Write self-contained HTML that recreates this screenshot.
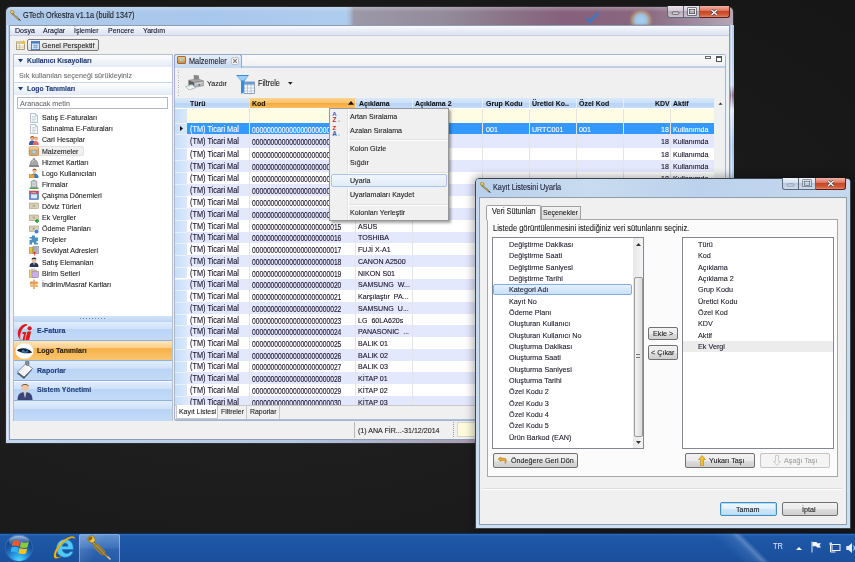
<!DOCTYPE html><html><head><meta charset="utf-8"><style>
*{margin:0;padding:0;box-sizing:border-box}
html,body{width:855px;height:562px;overflow:hidden}
body{background:#1b1b1b;font-family:"Liberation Sans",sans-serif;font-size:7.2px;color:#1e1e1e;position:relative}
.a{position:absolute}
svg{display:block}
.t{position:absolute;line-height:10px;height:10px;white-space:nowrap;transform-origin:0 50%;-webkit-text-stroke:0.1px currentColor}
.b{font-weight:bold}
</style></head><body><div class="a " style="left:0px;top:0px;width:855px;height:533px;background:radial-gradient(ellipse at 30% 60%,#222 0%,#1a1a1a 60%,#161616 100%)"></div>
<div class="a " style="left:5px;top:6px;width:729px;height:438px;border-radius:6px 6px 0 0;background:linear-gradient(90deg,#b0cbeb 0px,#a8c7ec 200px,#aecdee 340px,#a6bcd8 344px,#9c98a8 348px,#938a9a 440px,#8a7488 500px,#86607c 560px,#8a6880 640px,#a08ca0 690px,#b7a8b8 729px);border:1px solid #2e2e2e"></div>
<div class="a " style="left:6px;top:7px;width:727px;height:5px;border-radius:5px 5px 0 0;background:linear-gradient(180deg,rgba(255,255,255,.25),rgba(255,255,255,0))"></div>
<div class="a " style="left:585px;top:12px;width:14px;height:12px;"><svg width="14" height="12" viewBox="0 0 14 12"><path d="M1 6 L5 10 L13 1" stroke="#3a78c8" stroke-width="3" fill="none" opacity=".8"/></svg></div>
<div class="a " style="left:630px;top:10px;width:22px;height:15px;border-radius:50% 50% 0 0;background:radial-gradient(circle at 50% 70%,#a8d0f0 0%,#9cc4e8 40%,rgba(200,160,100,.7) 60%,rgba(140,100,120,0) 75%);filter:blur(1px)"></div>
<div class="a " style="left:6px;top:25px;width:3px;height:418px;background:linear-gradient(180deg,#b8d0ec,#c9dcf2)"></div>
<div class="a " style="left:6.5px;top:25px;width:1.2px;height:418px;background:rgba(255,255,255,.45)"></div>
<div class="a " style="left:729.5px;top:25px;width:4px;height:418px;background:linear-gradient(180deg,#b8cce6 0px,#c8d8f0 60px,#8c6f8c 70px,#e0e8f4 85px,#a8c4ea 120px,#d8e4f4 200px,#8a6a88 210px,#b4cae8 230px,#c8daf0 418px)"></div>
<div class="a " style="left:730.5px;top:25px;width:1.5px;height:418px;background:rgba(255,255,255,.55)"></div>
<div class="a " style="left:6px;top:440px;width:727px;height:3px;background:linear-gradient(90deg,#c3d7ef,#b4c9e4 40%,#a48fa4 70%,#b4c8e2)"></div>
<div class="a " style="left:10px;top:9.5px;width:11px;height:11px;"><svg width="11" height="11" viewBox="0 0 11 11"><ellipse cx="2.2" cy="2" rx="1.7" ry="2" transform="rotate(-40 2.2 2)" fill="#e8d068" stroke="#6a5a20" stroke-width=".5"/><path d="M2.5 3 L9.5 9.3 L8.8 10.2 L1.6 3.9Z" fill="#c8a848" stroke="#5a4a18" stroke-width=".4"/><path d="M4 5 L7.5 6.5 L8 8" stroke="#8a9ab8" stroke-width=".7" fill="none"/><path d="M8.5 9 L10.5 10.5" stroke="#303030" stroke-width="1"/></svg></div>
<div class="t " style="left:23px;top:10.6px;font-size:8.18px;color:#1a1a1a;transform:scaleX(0.8929)">GTech Orkestra v1.1a (build 1347)</div>
<div class="a " style="left:666.5px;top:6px;width:17px;height:12px;border:1px solid #5d6878;border-top:none;border-radius:0 0 0 3px;background:linear-gradient(180deg,#ece6ec 0%,#d4cad4 45%,#b8aab8 50%,#cdc2cd 100%)"><svg width="15" height="11" viewBox="0 0 15 11"><rect x="4.3" y="6" width="6.5" height="2.2" rx=".6" fill="#fff" stroke="#3a3e4a" stroke-width=".8"/></svg></div>
<div class="a " style="left:683.5px;top:6px;width:16.8px;height:12px;border:1px solid #5d6878;border-top:none;border-left:none;background:linear-gradient(180deg,#ece6ec 0%,#d4cad4 45%,#b8aab8 50%,#cdc2cd 100%)"><svg width="16" height="11" viewBox="0 0 16 11"><rect x="4.5" y="2.5" width="7" height="6" fill="none" stroke="#3a3e4a" stroke-width="2.2"/><rect x="4.5" y="2.5" width="7" height="6" fill="none" stroke="#fff" stroke-width=".9"/></svg></div>
<div class="a " style="left:700.3px;top:6px;width:29.5px;height:12px;border:1px solid #5a1f18;border-top:none;border-left:none;border-radius:0 0 3px 0;background:linear-gradient(180deg,#eeb0a4 0%,#de7a64 40%,#c84628 50%,#d25a38 80%,#e08a6a 100%)"><svg width="29" height="11" viewBox="0 0 29 11"><path d="M11.5 4 L17 9 M17 4 L11.5 9" stroke="#4a3a3a" stroke-width="2.6"/><path d="M11.5 4 L17 9 M17 4 L11.5 9" stroke="#fff" stroke-width="1.3"/></svg></div>
<div class="a " style="left:9px;top:25px;width:720.5px;height:415px;background:#f0f0f0;border:1px solid #8b9bb0"></div>
<div class="a " style="left:10px;top:26px;width:719px;height:10px;background:linear-gradient(180deg,#fafbfe,#e6eaf6 60%,#dde3f1);border-bottom:1px solid #c4cde0"></div>
<div class="t " style="left:14.5px;top:26.3px;font-size:7.84px;color:#10102a;transform:scaleX(0.8929)">Dosya</div>
<div class="t " style="left:42.5px;top:26.3px;font-size:7.84px;color:#10102a;transform:scaleX(0.8929)">Araçlar</div>
<div class="t " style="left:74px;top:26.3px;font-size:7.84px;color:#10102a;transform:scaleX(0.8929)">İşlemler</div>
<div class="t " style="left:108px;top:26.3px;font-size:7.84px;color:#10102a;transform:scaleX(0.8929)">Pencere</div>
<div class="t " style="left:142.5px;top:26.3px;font-size:7.84px;color:#10102a;transform:scaleX(0.8929)">Yardım</div>
<div class="a " style="left:15.5px;top:40px;width:10px;height:10px;"><svg width="10" height="10" viewBox="0 0 10 10"><rect x=".5" y="2" width="8" height="7.5" fill="#fdfbf0" stroke="#8a7a50" stroke-width=".7"/><rect x=".5" y="2" width="8" height="2" fill="#d8c890"/><path d="M1 6 H8 M1 7.8 H8 M3.5 4 V9.5" stroke="#b0a070" stroke-width=".5"/><path d="M7.5 0 L8.2 1.5 L9.8 1.7 L8.6 2.7 L9 4.3 L7.5 3.4 L6 4.3 L6.4 2.7 L5.2 1.7 L6.8 1.5Z" fill="#f4c020"/></svg></div>
<div class="a " style="left:27px;top:39px;width:72px;height:12px;border:1px solid #7a7a7a;border-radius:2px;background:linear-gradient(180deg,#f6f6f6,#dedede)"></div>
<div class="a " style="left:30.5px;top:40.5px;width:9px;height:9px;"><svg width="9" height="9" viewBox="0 0 9 9"><rect x=".4" y=".4" width="8.2" height="8.2" fill="#d8e8f8" stroke="#3a6ab0" stroke-width=".8"/><rect x=".4" y=".4" width="8.2" height="2.2" fill="#4a80c8"/><path d="M2 4.5 H7 M2 6.3 H7 M3.7 3.5 V7.5 M5.4 3.5 V7.5" stroke="#6a98d0" stroke-width=".6"/></svg></div>
<div class="t " style="left:42px;top:40.6px;font-size:7.95px;color:#222;transform:scaleX(0.8929)">Genel Perspektif</div>
<div class="a " style="left:12.5px;top:53.5px;width:160px;height:367px;background:#fff;border:1px solid #b4c0cf"></div>
<div class="a " style="left:13.5px;top:54.5px;width:158px;height:12.5px;background:linear-gradient(180deg,#fdfeff,#e4ebf5)"></div>
<div class="a " style="left:17.5px;top:59.3px;width:5px;height:4px;"><svg width="5" height="4"><path d="M0 0 H5 L2.5 3.5Z" fill="#1d3a78"/></svg></div>
<div class="t b" style="left:26.5px;top:55.800000000000004px;font-size:7.62px;color:#1d3a78;transform:scaleX(0.8929)">Kullanıcı Kısayolları</div>
<div class="t " style="left:19.3px;top:71.19999999999999px;font-size:8.06px;color:#707070;transform:scaleX(0.8929)">Sık kullanılan seçeneği sürükleyiniz</div>
<div class="a " style="left:13.5px;top:82px;width:158px;height:13px;background:linear-gradient(180deg,#fdfeff,#e4ebf5);border-top:1px solid #c9d6e8"></div>
<div class="a " style="left:17.5px;top:87.3px;width:5px;height:4px;"><svg width="5" height="4"><path d="M0 0 H5 L2.5 3.5Z" fill="#1d3a78"/></svg></div>
<div class="t b" style="left:26.5px;top:83.8px;font-size:7.62px;color:#1d3a78;transform:scaleX(0.8929)">Logo Tanımları</div>
<div class="a " style="left:17px;top:96.8px;width:151px;height:12px;background:#fff;border:1px solid #b4b8c0"></div>
<div class="t " style="left:20px;top:98.6px;font-size:8.06px;color:#6d6d6d;transform:scaleX(0.8929)">Aranacak metin</div>
<div class="a " style="left:28.5px;top:112.6px;width:10px;height:10px;"><svg width="10" height="10" viewBox="0 0 10 10"><path d="M1.5 0.5 H6.5 L8.5 2.5 V9.5 H1.5Z" fill="#f4f7fb" stroke="#9aa8ba" stroke-width=".7"/><path d="M3 3.5 H7 M3 5 H7 M3 6.5 H7 M3 8 H6" stroke="#b8c4d4" stroke-width=".6"/><path d="M6.5 .5 V2.5 H8.5" fill="#d8e0ea" stroke="#9aa8ba" stroke-width=".5"/></svg></div>
<div class="t " style="left:42px;top:113.19999999999999px;font-size:7.90px;color:#202020;transform:scaleX(0.8929)">Satış E-Faturaları</div>
<div class="a " style="left:28.5px;top:123.69999999999999px;width:10px;height:10px;"><svg width="10" height="10" viewBox="0 0 10 10"><path d="M1.5 0.5 H6.5 L8.5 2.5 V9.5 H1.5Z" fill="#f4f7fb" stroke="#9aa8ba" stroke-width=".7"/><path d="M3 3.5 H7 M3 5 H7 M3 6.5 H7 M3 8 H6" stroke="#b8c4d4" stroke-width=".6"/><path d="M6.5 .5 V2.5 H8.5" fill="#d8e0ea" stroke="#9aa8ba" stroke-width=".5"/></svg></div>
<div class="t " style="left:42px;top:124.29999999999998px;font-size:7.90px;color:#202020;transform:scaleX(0.8929)">Satınalma E-Faturaları</div>
<div class="a " style="left:28.5px;top:134.79999999999998px;width:10px;height:10px;"><svg width="10" height="10" viewBox="0 0 10 10"><circle cx="3.2" cy="3.3" r="2" fill="#e8a878"/><path d="M1 3 C1 0.5 5.5 0.5 5.5 3 C4.5 1.8 2 1.8 1 3Z" fill="#8a3a1a"/><path d="M0 10 C0 6.5 1.5 5.5 3.2 5.5 C5 5.5 6.3 6.5 6.3 10Z" fill="#3a5aa0"/><circle cx="6.8" cy="3.8" r="2" fill="#f0b890"/><path d="M4.6 4.5 C4.2 0.8 9.4 0.8 9 4.8 L8.6 3 C7.5 2 6 2 5 3Z" fill="#c0502a"/><path d="M3.8 10 C3.8 7 5.2 6 6.8 6 C8.5 6 9.8 7 9.8 10Z" fill="#e06868"/></svg></div>
<div class="t " style="left:42px;top:135.39999999999998px;font-size:7.90px;color:#202020;transform:scaleX(0.8929)">Cari Hesaplar</div>
<div class="a " style="left:28px;top:146.2px;width:56px;height:10px;background:#f0f0f0;border:1px solid #e2e2e2;border-radius:2px"></div>
<div class="a " style="left:28.5px;top:145.89999999999998px;width:10px;height:10px;"><svg width="10" height="10" viewBox="0 0 10 10"><rect x="0.5" y="1" width="9" height="8.5" rx=".8" fill="#e4a860" stroke="#a8702a" stroke-width=".6"/><rect x="0.5" y="1" width="9" height="2.5" fill="#f4c888"/><rect x="3" y="4.5" width="4" height="2.8" fill="#a8d8f0" stroke="#6a98b8" stroke-width=".4"/></svg></div>
<div class="t " style="left:42px;top:146.49999999999997px;font-size:7.90px;color:#202020;transform:scaleX(0.8929)">Malzemeler</div>
<div class="a " style="left:28.5px;top:157.0px;width:10px;height:10px;"><svg width="10" height="10" viewBox="0 0 10 10"><path d="M1 8.5 C1 4.5 3 2.5 5 2.5 C7 2.5 9 4.5 9 8.5Z" fill="#a8a8a8" stroke="#707070" stroke-width=".5"/><path d="M0 8.5 H10 V9.8 H0Z" fill="#6a6a6a"/><circle cx="5" cy="1.8" r=".9" fill="#808080"/><path d="M3 5 C3.5 4 4.5 3.5 5 3.5" stroke="#e8e8e8" stroke-width=".7" fill="none"/></svg></div>
<div class="t " style="left:42px;top:157.6px;font-size:7.90px;color:#202020;transform:scaleX(0.8929)">Hizmet Kartları</div>
<div class="a " style="left:28.5px;top:168.1px;width:10px;height:10px;"><svg width="10" height="10" viewBox="0 0 10 10"><circle cx="5.5" cy="2.8" r="2.1" fill="#f0b888"/><path d="M3.4 2.5 C3.5 0.2 7.5 0.2 7.6 2.5 C6.8 1.6 4.2 1.6 3.4 2.5Z" fill="#7a4a2a"/><path d="M1.5 10 C1.5 6.5 3.5 5.5 5.5 5.5 C7.5 5.5 9.5 6.5 9.5 10Z" fill="#3a78c8"/><rect x="0" y="6.5" width="5.5" height="3.5" fill="#e8a848" stroke="#a8702a" stroke-width=".4"/></svg></div>
<div class="t " style="left:42px;top:168.7px;font-size:7.90px;color:#202020;transform:scaleX(0.8929)">Logo Kullanıcıları</div>
<div class="a " style="left:28.5px;top:179.2px;width:10px;height:10px;"><svg width="10" height="10" viewBox="0 0 10 10"><path d="M2 9 V2.5 L5 0.8 L8 2.5 V9Z" fill="#b8bcc4" stroke="#80848c" stroke-width=".5"/><path d="M3 3.5 H7 M3 5 H7 M3 6.5 H7" stroke="#e4e8ee" stroke-width=".6"/><path d="M0.5 8.5 H9.5 V10 H0.5Z" fill="#48a848"/></svg></div>
<div class="t " style="left:42px;top:179.79999999999998px;font-size:7.90px;color:#202020;transform:scaleX(0.8929)">Firmalar</div>
<div class="a " style="left:28.5px;top:190.3px;width:10px;height:10px;"><svg width="10" height="10" viewBox="0 0 10 10"><rect x="0.5" y="1" width="9" height="8.5" fill="#5a8ad0" stroke="#3a5a98" stroke-width=".5"/><rect x="0.5" y="1" width="9" height="2.3" fill="#e84040"/><rect x="2" y="4.3" width="6" height="4" fill="#dce8f8"/><text x="2.2" y="3" font-size="2.2" fill="#fff" font-family="Liberation Sans">FON</text></svg></div>
<div class="t " style="left:42px;top:190.9px;font-size:7.90px;color:#202020;transform:scaleX(0.8929)">Çalışma Dönemleri</div>
<div class="a " style="left:28.5px;top:201.39999999999998px;width:10px;height:10px;"><svg width="10" height="10" viewBox="0 0 10 10"><rect x="0.3" y="2" width="9" height="5.5" fill="#d8cfb8" stroke="#a89c80" stroke-width=".6"/><circle cx="4.8" cy="4.8" r="1.3" fill="#b8ab8a"/></svg></div>
<div class="t " style="left:42px;top:201.99999999999997px;font-size:7.90px;color:#202020;transform:scaleX(0.8929)">Döviz Türleri</div>
<div class="a " style="left:28.5px;top:212.5px;width:10px;height:10px;"><svg width="10" height="10" viewBox="0 0 10 10"><rect x="0.3" y="2" width="9" height="5.5" fill="#d8cfb8" stroke="#a89c80" stroke-width=".6"/><circle cx="4.8" cy="4.8" r="1.3" fill="#b8ab8a"/><path d="M6 8 H10 M8 6 V10" stroke="#1aa82a" stroke-width="1.5"/></svg></div>
<div class="t " style="left:42px;top:213.1px;font-size:7.90px;color:#202020;transform:scaleX(0.8929)">Ek Vergiler</div>
<div class="a " style="left:28.5px;top:223.6px;width:10px;height:10px;"><svg width="10" height="10" viewBox="0 0 10 10"><rect x="0.3" y="2" width="9" height="5.5" fill="#d8cfb8" stroke="#a89c80" stroke-width=".6"/><circle cx="4.8" cy="4.8" r="1.3" fill="#b8ab8a"/><circle cx="7.5" cy="7.5" r="2.3" fill="#4a7ad0" stroke="#fff" stroke-width=".6"/></svg></div>
<div class="t " style="left:42px;top:224.2px;font-size:7.90px;color:#202020;transform:scaleX(0.8929)">Ödeme Planları</div>
<div class="a " style="left:28.5px;top:234.7px;width:10px;height:10px;"><svg width="10" height="10" viewBox="0 0 10 10"><path d="M3 0.5 H6 V2.5 H9 V6 H7.5 V8 H9 V9.5 H5 V7.5 H3 V9.5 H0.5 V5 H2.5 V3.5 H0.5 V2 H3Z" fill="#4a90c0"/></svg></div>
<div class="t " style="left:42px;top:235.29999999999998px;font-size:7.90px;color:#202020;transform:scaleX(0.8929)">Projeler</div>
<div class="a " style="left:28.5px;top:245.79999999999998px;width:10px;height:10px;"><svg width="10" height="10" viewBox="0 0 10 10"><rect x="0" y="1.5" width="4" height="6" fill="#e8c030" stroke="#8a7020" stroke-width=".4"/><rect x="4" y="0.5" width="6" height="7" fill="#b8b8c0" stroke="#686870" stroke-width=".4"/><path d="M5 0.5 V7.5 M7 0.5 V7.5" stroke="#787880" stroke-width=".4"/><path d="M4.5 6 L5.5 10 L6.5 6Z" fill="#e02828"/></svg></div>
<div class="t " style="left:42px;top:246.39999999999998px;font-size:7.90px;color:#202020;transform:scaleX(0.8929)">Sevkiyat Adresleri</div>
<div class="a " style="left:28.5px;top:256.9px;width:10px;height:10px;"><svg width="10" height="10" viewBox="0 0 10 10"><circle cx="5" cy="3.2" r="2.2" fill="#f0c098"/><path d="M2.5 2.6 C2.5 -0.3 7.5 -0.3 7.5 2.6 L5 2Z" fill="#28304a"/><path d="M0.5 10 C0.5 6.5 2.5 5.5 5 5.5 C7.5 5.5 9.5 6.5 9.5 10Z" fill="#2a3450"/><path d="M4.3 5.5 L5 8.5 L5.7 5.5Z" fill="#fff"/></svg></div>
<div class="t " style="left:42px;top:257.5px;font-size:7.90px;color:#202020;transform:scaleX(0.8929)">Satış Elemanları</div>
<div class="a " style="left:28.5px;top:268.0px;width:10px;height:10px;"><svg width="10" height="10" viewBox="0 0 10 10"><rect x="0.5" y="2" width="7" height="7.5" fill="#e8d070" stroke="#a89040" stroke-width=".5"/><rect x="3" y="3.5" width="6.5" height="6" fill="#c8b0e8" stroke="#8a70a8" stroke-width=".5"/><rect x="2" y="0.5" width="4" height="2" fill="#c8c8c8"/></svg></div>
<div class="t " style="left:42px;top:268.6px;font-size:7.90px;color:#202020;transform:scaleX(0.8929)">Birim Setleri</div>
<div class="a " style="left:28.5px;top:279.1px;width:10px;height:10px;"><svg width="10" height="10" viewBox="0 0 10 10"><path d="M5 0.5 V10" stroke="#a86a2a" stroke-width="1"/><path d="M1 2.5 H8 L9.5 4 L8 5.5 H1Z" fill="#e8a050"/><path d="M2 6 H9 V8 H2 L0.5 7Z" fill="#f0b868"/></svg></div>
<div class="t " style="left:42px;top:279.70000000000005px;font-size:7.90px;color:#202020;transform:scaleX(0.8929)">İndirim/Masraf Kartları</div>
<div class="a " style="left:13.5px;top:316px;width:158px;height:6px;background:linear-gradient(180deg,#d3e4f8,#bcd5f3)"></div>
<div class="a " style="left:80px;top:318px;width:26px;height:1.2px;background:repeating-linear-gradient(90deg,#6d86a8 0 1px,transparent 1px 3px)"></div>
<div class="a " style="left:13.5px;top:321.5px;width:158px;height:1px;background:#8fb0dc"></div>
<div class="a " style="left:13.5px;top:322.4px;width:158px;height:19.0px;background:linear-gradient(180deg,#e0edfc 0%,#cfe2fa 38%,#b9d4f6 42%,#c4dbf8 100%);border-bottom:1px solid #8fb0dc"></div>
<div class="t b" style="left:36.5px;top:326.3px;font-size:7.84px;color:#1d3a78;transform:scaleX(0.8929)">E-Fatura</div>
<div class="a " style="left:13.5px;top:341.4px;width:158px;height:20.0px;background:linear-gradient(180deg,#fde6b8 0%,#fbd08a 35%,#f7b14a 40%,#f9c56e 100%);border-bottom:1px solid #8fb0dc"></div>
<div class="t b" style="left:36.5px;top:345.8px;font-size:7.84px;color:#1a1a1a;transform:scaleX(0.8929)">Logo Tanımları</div>
<div class="a " style="left:13.5px;top:361.4px;width:158px;height:20.100000000000023px;background:linear-gradient(180deg,#e0edfc 0%,#cfe2fa 38%,#b9d4f6 42%,#c4dbf8 100%);border-bottom:1px solid #8fb0dc"></div>
<div class="t b" style="left:36.5px;top:365.85px;font-size:7.84px;color:#1d3a78;transform:scaleX(0.8929)">Raporlar</div>
<div class="a " style="left:13.5px;top:381.5px;width:158px;height:19.0px;background:linear-gradient(180deg,#e0edfc 0%,#cfe2fa 38%,#b9d4f6 42%,#c4dbf8 100%);border-bottom:1px solid #8fb0dc"></div>
<div class="t b" style="left:36.5px;top:385.40000000000003px;font-size:7.84px;color:#1d3a78;transform:scaleX(0.8929)">Sistem Yönetimi</div>
<div class="a " style="left:13.5px;top:400.5px;width:158px;height:20px;background:linear-gradient(180deg,#e0edfc 0%,#cfe2fa 38%,#b9d4f6 42%,#c4dbf8 100%)"></div>
<div class="a " style="left:16px;top:323px;width:17px;height:18px;"><svg width="17" height="18" viewBox="0 0 17 18"><path d="M10.5 1 C5 1.5 1.5 6 1.8 11.5 C2 15 4 17 6.5 17 L8 11 H6.3 L6.8 9 H10.3 L8.6 17 C8 17.3 7 17.3 6.3 17.1 C4.2 16.6 3.3 14.5 3.6 11.5 C4 7 7 3.5 10.8 2.6Z" fill="#e31818"/><path d="M4.5 15 C3.5 11 5.5 5 10.5 2.2 L11.5 1 C6 2 2.5 7 2.8 12 Z" fill="#e31818"/><circle cx="13.6" cy="5.3" r="2.1" fill="#e31818"/><path d="M11.4 8.5 H15.2 L13.1 17 H9.3Z" fill="#e31818"/></svg></div>
<div class="a " style="left:15px;top:343px;width:19px;height:16px;"><svg width="19" height="16" viewBox="0 0 19 16"><ellipse cx="9.5" cy="8" rx="9" ry="7.8" fill="#fff" stroke="#e8e8e8" stroke-width=".5"/><path d="M2 7.5 C4.5 5 9 4.5 13.5 6.5 C15 7.2 16 8.3 16.8 9.5 C14 10.5 10 10.8 6.5 9.5 C4.5 8.8 3 8.2 2 7.5Z" fill="#1a2638"/><ellipse cx="10" cy="7.7" rx="3.2" ry="2.1" fill="#2f7fc0"/><ellipse cx="10.5" cy="7.5" rx="1.2" ry=".9" fill="#0a1a2a"/><path d="M2.5 7.2 C6 6 11 5.5 16.5 9.3" stroke="#0a0a14" stroke-width=".8" fill="none"/></svg></div>
<div class="a " style="left:16px;top:361px;width:18px;height:19px;"><svg width="18" height="19" viewBox="0 0 18 19"><path d="M1 12.5 L9.5 4.5 L16 9 L8 18Z" fill="#4a5a70"/><path d="M1.5 11 L10 2.5 L16.5 7.5 L8 16Z" fill="#fafafa" stroke="#556070" stroke-width=".7"/><path d="M4 11 L10 5.5 M5.5 12.5 L11.5 7 M7 14 L12.5 9" stroke="#c8ccd4" stroke-width=".5"/><path d="M9.5 0.5 H13 V3.5 L11.8 4.5 H10.7 L9.5 3.5Z" fill="#8a8e98" stroke="#50545c" stroke-width=".5"/></svg></div>
<div class="a " style="left:17px;top:382px;width:16px;height:18px;"><svg width="16" height="18" viewBox="0 0 16 18"><circle cx="8" cy="5.5" r="3.6" fill="#f0c4a0"/><path d="M4.3 5 C4 1 12 1 11.7 5 C11 3.3 9.5 2.8 8 2.8 C6.5 2.8 5 3.3 4.3 5Z" fill="#3a2a1a"/><path d="M0.5 18 C0.5 12 3.5 10 8 10 C12.5 10 15.5 12 15.5 18Z" fill="#3a4478"/><path d="M6.5 10 L8 16 L9.5 10Z" fill="#f4f4f4"/><path d="M7.6 10.6 L8 14 L8.4 10.6Z" fill="#2a3050"/></svg></div>
<div class="a " style="left:174.3px;top:53.5px;width:551.5px;height:367px;background:#f0f0f0;border:1px solid #a2b6d2;border-radius:2px"></div>
<div class="a " style="left:175.3px;top:54.5px;width:549.5px;height:12.5px;background:linear-gradient(180deg,#fafafa,#f0f0f0)"></div>
<div class="a " style="left:175.3px;top:66px;width:549.5px;height:2px;background:#bcd0e8"></div>
<div class="a " style="left:174.3px;top:53.8px;width:68px;height:14px;background:linear-gradient(180deg,#e6eff9,#c5d8ee);border:1px solid #90a8c6;border-bottom:none;border-radius:3px 3px 0 0"></div>
<div class="a " style="left:177.3px;top:56.4px;width:8.5px;height:7.5px;background:linear-gradient(180deg,#f3c68a,#d8883a);border:1px solid #a56a2a;border-radius:1px"><div class="a" style="left:2px;top:2px;width:3px;height:2px;background:#9cd0f0"></div></div>
<div class="t " style="left:188.7px;top:56.6px;font-size:8.18px;color:#1a1a2a;transform:scaleX(0.8929)">Malzemeler</div>
<div class="a " style="left:230.5px;top:56.5px;width:8px;height:8px;"><svg width="8" height="8" viewBox="0 0 8 8"><rect x=".5" y=".5" width="7" height="7" rx="1.5" fill="#f6f6f6" stroke="#a8a8a8" stroke-width=".6"/><path d="M2.2 2.2 L5.8 5.8 M5.8 2.2 L2.2 5.8" stroke="#7a7a7a" stroke-width="1.2"/></svg></div>
<div class="a " style="left:705.3px;top:56px;width:5.5px;height:2.5px;border:1px solid #666;background:#fff"></div>
<div class="a " style="left:716.4px;top:55.8px;width:6px;height:6px;border:1px solid #555;border-top:2px solid #555;background:#fff"></div>
<div class="a " style="left:175.3px;top:68px;width:549.5px;height:29.5px;background:#f0f0f0"></div>
<div class="a " style="left:178.3px;top:70px;width:1px;height:26px;background:repeating-linear-gradient(180deg,#b8b8b8 0 1px,transparent 1px 2.5px)"></div>
<div class="a " style="left:185px;top:75px;width:19px;height:15px;"><svg width="19" height="15" viewBox="0 0 19 15"><path d="M9 0.3 L13.5 0.8 L13.8 5 L9.3 4.8Z" fill="#8a8a8a" stroke="#5a5a5a" stroke-width=".4"/><path d="M3.5 5.2 L13 3.8 L18.5 6 L9 7.6Z" fill="#a8a8a8" stroke="#6a6a6a" stroke-width=".4"/><path d="M3.5 5.2 L9 7.6 L9 12.4 L3.5 10Z" fill="#5e5e5e"/><path d="M9 7.6 L18.5 6 L18.5 10.8 L9 12.4Z" fill="#b8b8b8" stroke="#6a6a6a" stroke-width=".4"/><path d="M10 9 L17.5 7.7" stroke="#e8e8e8" stroke-width=".7"/><rect x="13.5" y="9" width="1.6" height="1.6" fill="#3a6ad0"/><path d="M0.5 11.5 L7 9.3 L10.5 12.8 L4 15Z" fill="#eef6f8" stroke="#7a8a90" stroke-width=".5"/><path d="M2.5 11.8 L7 10.5 L8.5 12.2" stroke="#a8d8e8" stroke-width=".6" fill="none"/></svg></div>
<div class="t " style="left:206.7px;top:78.89999999999999px;font-size:7.95px;color:#1a1a1a;transform:scaleX(0.8929)">Yazdır</div>
<div class="a " style="left:236px;top:74.6px;width:19px;height:18.5px;"><svg width="19" height="19" viewBox="0 0 19 19"><path d="M0 0 H13 L8.5 6 V17 L5 19 V6Z" fill="#3a8ad8"/><path d="M1 1 H12 L8 5.5 H5Z" fill="#9ad0f8"/><rect x="8" y="7" width="10.5" height="11.5" fill="#fff" stroke="#6a8ab0" stroke-width=".8"/><path d="M8 10 H18.5 M8 13 H18.5 M8 16 H18.5 M11.5 7 V18.5 M15 7 V18.5" stroke="#8aa8c8" stroke-width=".6"/><rect x="8" y="7" width="10.5" height="2.5" fill="#6a9ad0"/></svg></div>
<div class="t " style="left:257.9px;top:78.89999999999999px;font-size:8.18px;color:#1a1a1a;transform:scaleX(0.8929)">Filtrele</div>
<div class="a " style="left:288.3px;top:82px;width:4.5px;height:3px;"><svg width="5" height="3"><path d="M0 0 H4.6 L2.3 2.8Z" fill="#222"/></svg></div>
<div class="a " style="left:175px;top:97.6px;width:539px;height:307.70000000000005px;background:#fff"></div>
<div class="a " style="left:175px;top:97.6px;width:539px;height:10.9px;background:linear-gradient(180deg,#dbe9fb 0%,#c9def8 50%,#b8d3f5 51%,#c6dcf8 100%)"></div>
<div class="a " style="left:249.4px;top:97.6px;width:106.2px;height:10.9px;background:linear-gradient(180deg,#fbd48e 0%,#f9c168 50%,#f5a93a 51%,#f8be60 100%)"></div>
<div class="a " style="left:248.9px;top:98.6px;width:1px;height:9px;background:#fff;opacity:.5"></div>
<div class="a " style="left:355.1px;top:98.6px;width:1px;height:9px;background:#fff;opacity:.5"></div>
<div class="a " style="left:411.8px;top:98.6px;width:1px;height:9px;background:#fff;opacity:.5"></div>
<div class="a " style="left:482.2px;top:98.6px;width:1px;height:9px;background:#fff;opacity:.5"></div>
<div class="a " style="left:528.9px;top:98.6px;width:1px;height:9px;background:#fff;opacity:.5"></div>
<div class="a " style="left:575.7px;top:98.6px;width:1px;height:9px;background:#fff;opacity:.5"></div>
<div class="a " style="left:623.1px;top:98.6px;width:1px;height:9px;background:#fff;opacity:.5"></div>
<div class="a " style="left:670.0px;top:98.6px;width:1px;height:9px;background:#fff;opacity:.5"></div>
<div class="t b" style="left:190px;top:98.6px;font-size:7.84px;color:#111;transform:scaleX(0.8929)">Türü</div>
<div class="t b" style="left:252.2px;top:98.6px;font-size:7.84px;color:#111;transform:scaleX(0.8929)">Kod</div>
<div class="t b" style="left:358.5px;top:98.6px;font-size:7.84px;color:#111;transform:scaleX(0.8929)">Açıklama</div>
<div class="t b" style="left:415px;top:98.6px;font-size:7.84px;color:#111;transform:scaleX(0.8929)">Açıklama 2</div>
<div class="t b" style="left:485.5px;top:98.6px;font-size:7.84px;color:#111;transform:scaleX(0.8929)">Grup Kodu</div>
<div class="t b" style="left:532px;top:98.6px;font-size:7.84px;color:#111;transform:scaleX(0.8929)">Üretici Ko..</div>
<div class="t b" style="left:579px;top:98.6px;font-size:7.84px;color:#111;transform:scaleX(0.8929)">Özel Kod</div>
<div class="t b" style="left:655px;top:98.6px;font-size:7.84px;color:#111;transform:scaleX(0.8929)">KDV</div>
<div class="t b" style="left:673px;top:98.6px;font-size:7.84px;color:#111;transform:scaleX(0.8929)">Aktif</div>
<div class="a " style="left:348px;top:101px;width:6px;height:4px;"><svg width="6" height="4"><path d="M0 3.8 H6 L3 0Z" fill="#111"/></svg></div>
<div class="a " style="left:187px;top:108.5px;width:527px;height:14.5px;background:#fefce3"></div>
<div class="a " style="left:175px;top:108.5px;width:12px;height:14.5px;background:linear-gradient(90deg,#c7ddf8,#dae9fb)"></div>
<div class="a " style="left:187px;top:123px;width:527px;height:11.199999999999989px;background:#3598fc"></div>
<div class="a " style="left:175px;top:123px;width:12px;height:11.199999999999989px;background:linear-gradient(90deg,#c7ddf8,#dae9fb);border-top:1px solid #e8f0fb"></div>
<div class="t " style="left:190px;top:124.6px;font-size:8.23px;color:#fff;transform:scaleX(0.8929)">(TM) Ticari Mal</div>
<div class="t " style="left:251.7px;top:124.6px;font-size:8.51px;color:#fff;transform:scaleX(0.7874)">000000000000000000000007</div>
<div class="t " style="left:485.5px;top:124.6px;font-size:7.95px;color:#fff;transform:scaleX(0.8929)">001</div>
<div class="t " style="left:532px;top:124.6px;font-size:7.95px;color:#fff;transform:scaleX(0.8929)">URTC001</div>
<div class="t " style="left:579px;top:124.6px;font-size:7.95px;color:#fff;transform:scaleX(0.8929)">001</div>
<div class="t " style="left:660.5px;top:124.6px;font-size:7.95px;color:#fff;transform:scaleX(0.8929)">18</div>
<div class="t " style="left:673px;top:124.6px;font-size:7.95px;color:#fff;transform:scaleX(0.8929)">Kullanımda</div>
<div class="a " style="left:187px;top:134.2px;width:527px;height:14.200000000000017px;background:#e3e8fc"></div>
<div class="a " style="left:175px;top:134.2px;width:12px;height:14.200000000000017px;background:linear-gradient(90deg,#c7ddf8,#dae9fb);border-top:1px solid #e8f0fb"></div>
<div class="t " style="left:190px;top:137.3px;font-size:8.23px;color:#140c24;transform:scaleX(0.8929)">(TM) Ticari Mal</div>
<div class="t " style="left:251.7px;top:137.3px;font-size:8.51px;color:#140c24;transform:scaleX(0.7874)">000000000000000000000008</div>
<div class="t " style="left:660.5px;top:137.3px;font-size:7.95px;color:#140c24;transform:scaleX(0.8929)">18</div>
<div class="t " style="left:673px;top:137.3px;font-size:7.95px;color:#140c24;transform:scaleX(0.8929)">Kullanımda</div>
<div class="a " style="left:187px;top:148.4px;width:527px;height:11.799999999999983px;background:#ffffff"></div>
<div class="a " style="left:175px;top:148.4px;width:12px;height:11.799999999999983px;background:linear-gradient(90deg,#c7ddf8,#dae9fb);border-top:1px solid #e8f0fb"></div>
<div class="t " style="left:190px;top:150.3px;font-size:8.23px;color:#140c24;transform:scaleX(0.8929)">(TM) Ticari Mal</div>
<div class="t " style="left:251.7px;top:150.3px;font-size:8.51px;color:#140c24;transform:scaleX(0.7874)">000000000000000000000009</div>
<div class="t " style="left:660.5px;top:150.3px;font-size:7.95px;color:#140c24;transform:scaleX(0.8929)">18</div>
<div class="t " style="left:673px;top:150.3px;font-size:7.95px;color:#140c24;transform:scaleX(0.8929)">Kullanımda</div>
<div class="a " style="left:187px;top:160.2px;width:527px;height:12.200000000000017px;background:#e3e8fc"></div>
<div class="a " style="left:175px;top:160.2px;width:12px;height:12.200000000000017px;background:linear-gradient(90deg,#c7ddf8,#dae9fb);border-top:1px solid #e8f0fb"></div>
<div class="t " style="left:190px;top:162.3px;font-size:8.23px;color:#140c24;transform:scaleX(0.8929)">(TM) Ticari Mal</div>
<div class="t " style="left:251.7px;top:162.3px;font-size:8.51px;color:#140c24;transform:scaleX(0.7874)">000000000000000000000010</div>
<div class="t " style="left:660.5px;top:162.3px;font-size:7.95px;color:#140c24;transform:scaleX(0.8929)">18</div>
<div class="t " style="left:673px;top:162.3px;font-size:7.95px;color:#140c24;transform:scaleX(0.8929)">Kullanımda</div>
<div class="a " style="left:187px;top:172.4px;width:527px;height:11.799999999999983px;background:#ffffff"></div>
<div class="a " style="left:175px;top:172.4px;width:12px;height:11.799999999999983px;background:linear-gradient(90deg,#c7ddf8,#dae9fb);border-top:1px solid #e8f0fb"></div>
<div class="t " style="left:190px;top:174.3px;font-size:8.23px;color:#140c24;transform:scaleX(0.8929)">(TM) Ticari Mal</div>
<div class="t " style="left:251.7px;top:174.3px;font-size:8.51px;color:#140c24;transform:scaleX(0.7874)">000000000000000000000011</div>
<div class="t " style="left:660.5px;top:174.3px;font-size:7.95px;color:#140c24;transform:scaleX(0.8929)">18</div>
<div class="t " style="left:673px;top:174.3px;font-size:7.95px;color:#140c24;transform:scaleX(0.8929)">Kullanımda</div>
<div class="a " style="left:187px;top:184.2px;width:527px;height:11.800000000000011px;background:#e3e8fc"></div>
<div class="a " style="left:175px;top:184.2px;width:12px;height:11.800000000000011px;background:linear-gradient(90deg,#c7ddf8,#dae9fb);border-top:1px solid #e8f0fb"></div>
<div class="t " style="left:190px;top:186.1px;font-size:8.23px;color:#140c24;transform:scaleX(0.8929)">(TM) Ticari Mal</div>
<div class="t " style="left:251.7px;top:186.1px;font-size:8.51px;color:#140c24;transform:scaleX(0.7874)">000000000000000000000012</div>
<div class="t " style="left:660.5px;top:186.1px;font-size:7.95px;color:#140c24;transform:scaleX(0.8929)">18</div>
<div class="t " style="left:673px;top:186.1px;font-size:7.95px;color:#140c24;transform:scaleX(0.8929)">Kullanımda</div>
<div class="a " style="left:187px;top:196px;width:527px;height:11.800000000000011px;background:#ffffff"></div>
<div class="a " style="left:175px;top:196px;width:12px;height:11.800000000000011px;background:linear-gradient(90deg,#c7ddf8,#dae9fb);border-top:1px solid #e8f0fb"></div>
<div class="t " style="left:190px;top:197.9px;font-size:8.23px;color:#140c24;transform:scaleX(0.8929)">(TM) Ticari Mal</div>
<div class="t " style="left:251.7px;top:197.9px;font-size:8.51px;color:#140c24;transform:scaleX(0.7874)">000000000000000000000013</div>
<div class="t " style="left:660.5px;top:197.9px;font-size:7.95px;color:#140c24;transform:scaleX(0.8929)">18</div>
<div class="t " style="left:673px;top:197.9px;font-size:7.95px;color:#140c24;transform:scaleX(0.8929)">Kullanımda</div>
<div class="a " style="left:187px;top:207.8px;width:527px;height:12.099999999999994px;background:#e3e8fc"></div>
<div class="a " style="left:175px;top:207.8px;width:12px;height:12.099999999999994px;background:linear-gradient(90deg,#c7ddf8,#dae9fb);border-top:1px solid #e8f0fb"></div>
<div class="t " style="left:190px;top:209.85000000000002px;font-size:8.23px;color:#140c24;transform:scaleX(0.8929)">(TM) Ticari Mal</div>
<div class="t " style="left:251.7px;top:209.85000000000002px;font-size:8.51px;color:#140c24;transform:scaleX(0.7874)">000000000000000000000014</div>
<div class="t " style="left:660.5px;top:209.85000000000002px;font-size:7.95px;color:#140c24;transform:scaleX(0.8929)">18</div>
<div class="t " style="left:673px;top:209.85000000000002px;font-size:7.95px;color:#140c24;transform:scaleX(0.8929)">Kullanımda</div>
<div class="a " style="left:187px;top:219.9px;width:527px;height:11.719999999999999px;background:#ffffff"></div>
<div class="a " style="left:175px;top:219.9px;width:12px;height:11.719999999999999px;background:linear-gradient(90deg,#c7ddf8,#dae9fb);border-top:1px solid #e8f0fb"></div>
<div class="t " style="left:190px;top:221.76px;font-size:8.23px;color:#140c24;transform:scaleX(0.8929)">(TM) Ticari Mal</div>
<div class="t " style="left:251.7px;top:221.76px;font-size:8.51px;color:#140c24;transform:scaleX(0.7874)">000000000000000000000015</div>
<div class="t " style="left:358px;top:221.76px;font-size:7.95px;color:#140c24;transform:scaleX(0.8929)">ASUS</div>
<div class="t " style="left:660.5px;top:221.76px;font-size:7.95px;color:#140c24;transform:scaleX(0.8929)">18</div>
<div class="t " style="left:673px;top:221.76px;font-size:7.95px;color:#140c24;transform:scaleX(0.8929)">Kullanımda</div>
<div class="a " style="left:187px;top:231.62px;width:527px;height:11.719999999999999px;background:#e3e8fc"></div>
<div class="a " style="left:175px;top:231.62px;width:12px;height:11.719999999999999px;background:linear-gradient(90deg,#c7ddf8,#dae9fb);border-top:1px solid #e8f0fb"></div>
<div class="t " style="left:190px;top:233.48000000000002px;font-size:8.23px;color:#140c24;transform:scaleX(0.8929)">(TM) Ticari Mal</div>
<div class="t " style="left:251.7px;top:233.48000000000002px;font-size:8.51px;color:#140c24;transform:scaleX(0.7874)">000000000000000000000016</div>
<div class="t " style="left:358px;top:233.48000000000002px;font-size:7.95px;color:#140c24;transform:scaleX(0.8929)">TOSHIBA</div>
<div class="t " style="left:660.5px;top:233.48000000000002px;font-size:7.95px;color:#140c24;transform:scaleX(0.8929)">18</div>
<div class="t " style="left:673px;top:233.48000000000002px;font-size:7.95px;color:#140c24;transform:scaleX(0.8929)">Kullanımda</div>
<div class="a " style="left:187px;top:243.34px;width:527px;height:11.719999999999999px;background:#ffffff"></div>
<div class="a " style="left:175px;top:243.34px;width:12px;height:11.719999999999999px;background:linear-gradient(90deg,#c7ddf8,#dae9fb);border-top:1px solid #e8f0fb"></div>
<div class="t " style="left:190px;top:245.2px;font-size:8.23px;color:#140c24;transform:scaleX(0.8929)">(TM) Ticari Mal</div>
<div class="t " style="left:251.7px;top:245.2px;font-size:8.51px;color:#140c24;transform:scaleX(0.7874)">000000000000000000000017</div>
<div class="t " style="left:358px;top:245.2px;font-size:7.95px;color:#140c24;transform:scaleX(0.8929)">FUJİ X-A1</div>
<div class="t " style="left:660.5px;top:245.2px;font-size:7.95px;color:#140c24;transform:scaleX(0.8929)">18</div>
<div class="t " style="left:673px;top:245.2px;font-size:7.95px;color:#140c24;transform:scaleX(0.8929)">Kullanımda</div>
<div class="a " style="left:187px;top:255.06px;width:527px;height:11.720000000000027px;background:#e3e8fc"></div>
<div class="a " style="left:175px;top:255.06px;width:12px;height:11.720000000000027px;background:linear-gradient(90deg,#c7ddf8,#dae9fb);border-top:1px solid #e8f0fb"></div>
<div class="t " style="left:190px;top:256.92px;font-size:8.23px;color:#140c24;transform:scaleX(0.8929)">(TM) Ticari Mal</div>
<div class="t " style="left:251.7px;top:256.92px;font-size:8.51px;color:#140c24;transform:scaleX(0.7874)">000000000000000000000018</div>
<div class="t " style="left:358px;top:256.92px;font-size:7.95px;color:#140c24;transform:scaleX(0.8929)">CANON A2500</div>
<div class="t " style="left:660.5px;top:256.92px;font-size:7.95px;color:#140c24;transform:scaleX(0.8929)">18</div>
<div class="t " style="left:673px;top:256.92px;font-size:7.95px;color:#140c24;transform:scaleX(0.8929)">Kullanımda</div>
<div class="a " style="left:187px;top:266.78000000000003px;width:527px;height:11.71999999999997px;background:#ffffff"></div>
<div class="a " style="left:175px;top:266.78000000000003px;width:12px;height:11.71999999999997px;background:linear-gradient(90deg,#c7ddf8,#dae9fb);border-top:1px solid #e8f0fb"></div>
<div class="t " style="left:190px;top:268.64px;font-size:8.23px;color:#140c24;transform:scaleX(0.8929)">(TM) Ticari Mal</div>
<div class="t " style="left:251.7px;top:268.64px;font-size:8.51px;color:#140c24;transform:scaleX(0.7874)">000000000000000000000019</div>
<div class="t " style="left:358px;top:268.64px;font-size:7.95px;color:#140c24;transform:scaleX(0.8929)">NIKON S01</div>
<div class="t " style="left:660.5px;top:268.64px;font-size:7.95px;color:#140c24;transform:scaleX(0.8929)">18</div>
<div class="t " style="left:673px;top:268.64px;font-size:7.95px;color:#140c24;transform:scaleX(0.8929)">Kullanımda</div>
<div class="a " style="left:187px;top:278.5px;width:527px;height:11.720000000000027px;background:#e3e8fc"></div>
<div class="a " style="left:175px;top:278.5px;width:12px;height:11.720000000000027px;background:linear-gradient(90deg,#c7ddf8,#dae9fb);border-top:1px solid #e8f0fb"></div>
<div class="t " style="left:190px;top:280.36px;font-size:8.23px;color:#140c24;transform:scaleX(0.8929)">(TM) Ticari Mal</div>
<div class="t " style="left:251.7px;top:280.36px;font-size:8.51px;color:#140c24;transform:scaleX(0.7874)">000000000000000000000020</div>
<div class="t " style="left:358px;top:280.36px;font-size:7.95px;color:#140c24;transform:scaleX(0.8929)">SAMSUNG &nbsp;W...</div>
<div class="t " style="left:660.5px;top:280.36px;font-size:7.95px;color:#140c24;transform:scaleX(0.8929)">18</div>
<div class="t " style="left:673px;top:280.36px;font-size:7.95px;color:#140c24;transform:scaleX(0.8929)">Kullanımda</div>
<div class="a " style="left:187px;top:290.22px;width:527px;height:11.71999999999997px;background:#ffffff"></div>
<div class="a " style="left:175px;top:290.22px;width:12px;height:11.71999999999997px;background:linear-gradient(90deg,#c7ddf8,#dae9fb);border-top:1px solid #e8f0fb"></div>
<div class="t " style="left:190px;top:292.08000000000004px;font-size:8.23px;color:#140c24;transform:scaleX(0.8929)">(TM) Ticari Mal</div>
<div class="t " style="left:251.7px;top:292.08000000000004px;font-size:8.51px;color:#140c24;transform:scaleX(0.7874)">000000000000000000000021</div>
<div class="t " style="left:358px;top:292.08000000000004px;font-size:7.95px;color:#140c24;transform:scaleX(0.8929)">Karşılaştır &nbsp;PA...</div>
<div class="t " style="left:660.5px;top:292.08000000000004px;font-size:7.95px;color:#140c24;transform:scaleX(0.8929)">18</div>
<div class="t " style="left:673px;top:292.08000000000004px;font-size:7.95px;color:#140c24;transform:scaleX(0.8929)">Kullanımda</div>
<div class="a " style="left:187px;top:301.94px;width:527px;height:11.720000000000027px;background:#e3e8fc"></div>
<div class="a " style="left:175px;top:301.94px;width:12px;height:11.720000000000027px;background:linear-gradient(90deg,#c7ddf8,#dae9fb);border-top:1px solid #e8f0fb"></div>
<div class="t " style="left:190px;top:303.8px;font-size:8.23px;color:#140c24;transform:scaleX(0.8929)">(TM) Ticari Mal</div>
<div class="t " style="left:251.7px;top:303.8px;font-size:8.51px;color:#140c24;transform:scaleX(0.7874)">000000000000000000000022</div>
<div class="t " style="left:358px;top:303.8px;font-size:7.95px;color:#140c24;transform:scaleX(0.8929)">SAMSUNG &nbsp;U...</div>
<div class="t " style="left:660.5px;top:303.8px;font-size:7.95px;color:#140c24;transform:scaleX(0.8929)">18</div>
<div class="t " style="left:673px;top:303.8px;font-size:7.95px;color:#140c24;transform:scaleX(0.8929)">Kullanımda</div>
<div class="a " style="left:187px;top:313.66px;width:527px;height:11.71999999999997px;background:#ffffff"></div>
<div class="a " style="left:175px;top:313.66px;width:12px;height:11.71999999999997px;background:linear-gradient(90deg,#c7ddf8,#dae9fb);border-top:1px solid #e8f0fb"></div>
<div class="t " style="left:190px;top:315.52px;font-size:8.23px;color:#140c24;transform:scaleX(0.8929)">(TM) Ticari Mal</div>
<div class="t " style="left:251.7px;top:315.52px;font-size:8.51px;color:#140c24;transform:scaleX(0.7874)">000000000000000000000023</div>
<div class="t " style="left:358px;top:315.52px;font-size:7.95px;color:#140c24;transform:scaleX(0.8929)">LG &nbsp;60LA620s</div>
<div class="t " style="left:660.5px;top:315.52px;font-size:7.95px;color:#140c24;transform:scaleX(0.8929)">18</div>
<div class="t " style="left:673px;top:315.52px;font-size:7.95px;color:#140c24;transform:scaleX(0.8929)">Kullanımda</div>
<div class="a " style="left:187px;top:325.38px;width:527px;height:11.720000000000027px;background:#e3e8fc"></div>
<div class="a " style="left:175px;top:325.38px;width:12px;height:11.720000000000027px;background:linear-gradient(90deg,#c7ddf8,#dae9fb);border-top:1px solid #e8f0fb"></div>
<div class="t " style="left:190px;top:327.24px;font-size:8.23px;color:#140c24;transform:scaleX(0.8929)">(TM) Ticari Mal</div>
<div class="t " style="left:251.7px;top:327.24px;font-size:8.51px;color:#140c24;transform:scaleX(0.7874)">000000000000000000000024</div>
<div class="t " style="left:358px;top:327.24px;font-size:7.95px;color:#140c24;transform:scaleX(0.8929)">PANASONIC &nbsp;...</div>
<div class="t " style="left:660.5px;top:327.24px;font-size:7.95px;color:#140c24;transform:scaleX(0.8929)">18</div>
<div class="t " style="left:673px;top:327.24px;font-size:7.95px;color:#140c24;transform:scaleX(0.8929)">Kullanımda</div>
<div class="a " style="left:187px;top:337.1px;width:527px;height:11.720000000000027px;background:#ffffff"></div>
<div class="a " style="left:175px;top:337.1px;width:12px;height:11.720000000000027px;background:linear-gradient(90deg,#c7ddf8,#dae9fb);border-top:1px solid #e8f0fb"></div>
<div class="t " style="left:190px;top:338.96000000000004px;font-size:8.23px;color:#140c24;transform:scaleX(0.8929)">(TM) Ticari Mal</div>
<div class="t " style="left:251.7px;top:338.96000000000004px;font-size:8.51px;color:#140c24;transform:scaleX(0.7874)">000000000000000000000025</div>
<div class="t " style="left:358px;top:338.96000000000004px;font-size:7.95px;color:#140c24;transform:scaleX(0.8929)">BALIK 01</div>
<div class="t " style="left:660.5px;top:338.96000000000004px;font-size:7.95px;color:#140c24;transform:scaleX(0.8929)">18</div>
<div class="t " style="left:673px;top:338.96000000000004px;font-size:7.95px;color:#140c24;transform:scaleX(0.8929)">Kullanımda</div>
<div class="a " style="left:187px;top:348.82000000000005px;width:527px;height:11.71999999999997px;background:#e3e8fc"></div>
<div class="a " style="left:175px;top:348.82000000000005px;width:12px;height:11.71999999999997px;background:linear-gradient(90deg,#c7ddf8,#dae9fb);border-top:1px solid #e8f0fb"></div>
<div class="t " style="left:190px;top:350.68000000000006px;font-size:8.23px;color:#140c24;transform:scaleX(0.8929)">(TM) Ticari Mal</div>
<div class="t " style="left:251.7px;top:350.68000000000006px;font-size:8.51px;color:#140c24;transform:scaleX(0.7874)">000000000000000000000026</div>
<div class="t " style="left:358px;top:350.68000000000006px;font-size:7.95px;color:#140c24;transform:scaleX(0.8929)">BALIK 02</div>
<div class="t " style="left:660.5px;top:350.68000000000006px;font-size:7.95px;color:#140c24;transform:scaleX(0.8929)">18</div>
<div class="t " style="left:673px;top:350.68000000000006px;font-size:7.95px;color:#140c24;transform:scaleX(0.8929)">Kullanımda</div>
<div class="a " style="left:187px;top:360.54px;width:527px;height:11.71999999999997px;background:#ffffff"></div>
<div class="a " style="left:175px;top:360.54px;width:12px;height:11.71999999999997px;background:linear-gradient(90deg,#c7ddf8,#dae9fb);border-top:1px solid #e8f0fb"></div>
<div class="t " style="left:190px;top:362.4px;font-size:8.23px;color:#140c24;transform:scaleX(0.8929)">(TM) Ticari Mal</div>
<div class="t " style="left:251.7px;top:362.4px;font-size:8.51px;color:#140c24;transform:scaleX(0.7874)">000000000000000000000027</div>
<div class="t " style="left:358px;top:362.4px;font-size:7.95px;color:#140c24;transform:scaleX(0.8929)">BALIK 03</div>
<div class="t " style="left:660.5px;top:362.4px;font-size:7.95px;color:#140c24;transform:scaleX(0.8929)">18</div>
<div class="t " style="left:673px;top:362.4px;font-size:7.95px;color:#140c24;transform:scaleX(0.8929)">Kullanımda</div>
<div class="a " style="left:187px;top:372.26px;width:527px;height:11.720000000000027px;background:#e3e8fc"></div>
<div class="a " style="left:175px;top:372.26px;width:12px;height:11.720000000000027px;background:linear-gradient(90deg,#c7ddf8,#dae9fb);border-top:1px solid #e8f0fb"></div>
<div class="t " style="left:190px;top:374.12px;font-size:8.23px;color:#140c24;transform:scaleX(0.8929)">(TM) Ticari Mal</div>
<div class="t " style="left:251.7px;top:374.12px;font-size:8.51px;color:#140c24;transform:scaleX(0.7874)">000000000000000000000028</div>
<div class="t " style="left:358px;top:374.12px;font-size:7.95px;color:#140c24;transform:scaleX(0.8929)">KİTAP 01</div>
<div class="t " style="left:660.5px;top:374.12px;font-size:7.95px;color:#140c24;transform:scaleX(0.8929)">18</div>
<div class="t " style="left:673px;top:374.12px;font-size:7.95px;color:#140c24;transform:scaleX(0.8929)">Kullanımda</div>
<div class="a " style="left:187px;top:383.98px;width:527px;height:11.720000000000027px;background:#ffffff"></div>
<div class="a " style="left:175px;top:383.98px;width:12px;height:11.720000000000027px;background:linear-gradient(90deg,#c7ddf8,#dae9fb);border-top:1px solid #e8f0fb"></div>
<div class="t " style="left:190px;top:385.84000000000003px;font-size:8.23px;color:#140c24;transform:scaleX(0.8929)">(TM) Ticari Mal</div>
<div class="t " style="left:251.7px;top:385.84000000000003px;font-size:8.51px;color:#140c24;transform:scaleX(0.7874)">000000000000000000000029</div>
<div class="t " style="left:358px;top:385.84000000000003px;font-size:7.95px;color:#140c24;transform:scaleX(0.8929)">KİTAP 02</div>
<div class="t " style="left:660.5px;top:385.84000000000003px;font-size:7.95px;color:#140c24;transform:scaleX(0.8929)">18</div>
<div class="t " style="left:673px;top:385.84000000000003px;font-size:7.95px;color:#140c24;transform:scaleX(0.8929)">Kullanımda</div>
<div class="a " style="left:187px;top:395.70000000000005px;width:527px;height:11.720000000000027px;background:#e3e8fc"></div>
<div class="a " style="left:175px;top:395.70000000000005px;width:12px;height:11.720000000000027px;background:linear-gradient(90deg,#c7ddf8,#dae9fb);border-top:1px solid #e8f0fb"></div>
<div class="t " style="left:190px;top:397.56000000000006px;font-size:8.23px;color:#140c24;transform:scaleX(0.8929)">(TM) Ticari Mal</div>
<div class="t " style="left:251.7px;top:397.56000000000006px;font-size:8.51px;color:#140c24;transform:scaleX(0.7874)">000000000000000000000030</div>
<div class="t " style="left:358px;top:397.56000000000006px;font-size:7.95px;color:#140c24;transform:scaleX(0.8929)">KİTAP 03</div>
<div class="t " style="left:660.5px;top:397.56000000000006px;font-size:7.95px;color:#140c24;transform:scaleX(0.8929)">18</div>
<div class="t " style="left:673px;top:397.56000000000006px;font-size:7.95px;color:#140c24;transform:scaleX(0.8929)">Kullanımda</div>
<div class="a " style="left:248.9px;top:108.5px;width:1px;height:297px;background:#e4e4e4"></div>
<div class="a " style="left:355.1px;top:108.5px;width:1px;height:297px;background:#e4e4e4"></div>
<div class="a " style="left:411.8px;top:108.5px;width:1px;height:297px;background:#e4e4e4"></div>
<div class="a " style="left:482.2px;top:108.5px;width:1px;height:297px;background:#e4e4e4"></div>
<div class="a " style="left:528.9px;top:108.5px;width:1px;height:297px;background:#e4e4e4"></div>
<div class="a " style="left:575.7px;top:108.5px;width:1px;height:297px;background:#e4e4e4"></div>
<div class="a " style="left:623.1px;top:108.5px;width:1px;height:297px;background:#e4e4e4"></div>
<div class="a " style="left:670.0px;top:108.5px;width:1px;height:297px;background:#e4e4e4"></div>
<div class="a " style="left:670.0px;top:108.5px;width:1px;height:297px;background:#e4e4e4"></div>
<div class="a " style="left:180px;top:126px;width:3px;height:5px;"><svg width="3" height="5"><path d="M0 0 L3 2.5 L0 5Z" fill="#111"/></svg></div>
<div class="a " style="left:714.3px;top:97.6px;width:10.5px;height:307.7px;background:#f0f0f0"></div>
<div class="a " style="left:717.5px;top:101.5px;width:5px;height:3px;"><svg width="5" height="3"><path d="M0.5 2.8 H4.5 L2.5 0.5Z" fill="#333"/></svg></div>
<div class="a " style="left:175.3px;top:405.3px;width:549.5px;height:13.5px;background:#f0f0f0;border-top:1px solid #c8c8c8"></div>
<div class="a " style="left:176.3px;top:405px;width:41.5px;height:13.5px;background:#fff;border:1px solid #c8c8c8;border-top:none"></div>
<div class="t " style="left:178.7px;top:407.40000000000003px;font-size:7.73px;color:#1a1a1a;transform:scaleX(0.8929)">Kayıt Listesi</div>
<div class="a " style="left:217.8px;top:406px;width:29.5px;height:12.5px;background:#f0f0f0;border-right:1px solid #c8c8c8"></div>
<div class="t " style="left:220.5px;top:407.40000000000003px;font-size:7.73px;color:#1a1a1a;transform:scaleX(0.8929)">Filtreler</div>
<div class="a " style="left:247.3px;top:406px;width:32.5px;height:12.5px;background:#f0f0f0;border-right:1px solid #c8c8c8"></div>
<div class="t " style="left:250px;top:407.40000000000003px;font-size:7.73px;color:#1a1a1a;transform:scaleX(0.8929)">Raporlar</div>
<div class="a " style="left:175.3px;top:418.5px;width:549.5px;height:1.5px;background:#a9bfdc"></div>
<div class="a " style="left:353.5px;top:421.7px;width:1px;height:16px;background:#b8b8b8"></div>
<div class="t " style="left:357.5px;top:425.6px;font-size:7.95px;color:#1a1a1a;transform:scaleX(0.8929)">(1) ANA FİR...-31/12/2014</div>
<div class="a " style="left:453px;top:422px;width:1px;height:15px;background:repeating-linear-gradient(180deg,#999 0 1px,transparent 1px 2px)"></div>
<div class="a " style="left:457px;top:422px;width:25px;height:15px;background:#fdfbdc;border:1px solid #d8d8c8"></div>
<div class="a " style="left:328.8px;top:108.2px;width:120.4px;height:113.1px;box-shadow:1.5px 1.5px 2.5px rgba(0,0,0,.35)"></div>
<div class="a " style="left:328.8px;top:108.2px;width:120.4px;height:113.1px;background:#f0f0f0;border:1px solid #979797"></div>
<div class="a " style="left:347.4px;top:109.2px;width:1px;height:111px;background:#e2e3e3;box-shadow:1px 0 0 #fff"></div>
<div class="a " style="left:348.5px;top:139.2px;width:99.5px;height:1px;background:#e0e0e0;box-shadow:0 1px 0 #fff"></div>
<div class="a " style="left:348.5px;top:171.6px;width:99.5px;height:1px;background:#e0e0e0;box-shadow:0 1px 0 #fff"></div>
<div class="a " style="left:348.5px;top:203.6px;width:99.5px;height:1px;background:#e0e0e0;box-shadow:0 1px 0 #fff"></div>
<div class="a " style="left:331px;top:174.4px;width:115.7px;height:12.8px;background:linear-gradient(180deg,#f2f6fb,#e1ebf8);border:1px solid #a8c4e8;border-radius:2px"></div>
<div class="t " style="left:350.2px;top:112.3px;font-size:7.95px;color:#1a1a1a;transform:scaleX(0.8929)">Artan Sıralama</div>
<div class="t " style="left:350.2px;top:125.79999999999998px;font-size:7.95px;color:#1a1a1a;transform:scaleX(0.8929)">Azalan Sıralama</div>
<div class="t " style="left:350.2px;top:144.4px;font-size:7.95px;color:#1a1a1a;transform:scaleX(0.8929)">Kolon Gizle</div>
<div class="t " style="left:350.2px;top:157.79999999999998px;font-size:7.95px;color:#1a1a1a;transform:scaleX(0.8929)">Sığdır</div>
<div class="t " style="left:350.2px;top:176.4px;font-size:7.95px;color:#1a1a1a;transform:scaleX(0.8929)">Uyarla</div>
<div class="t " style="left:350.2px;top:189.79999999999998px;font-size:7.95px;color:#1a1a1a;transform:scaleX(0.8929)">Uyarlamaları Kaydet</div>
<div class="t " style="left:350.2px;top:208.4px;font-size:7.95px;color:#1a1a1a;transform:scaleX(0.8929)">Kolonları Yerleştir</div>
<div class="a " style="left:331.5px;top:110px;width:9px;height:13px;"><svg width="9" height="13" viewBox="0 0 9 13"><text x="0.3" y="5.5" font-size="6" font-family="Liberation Sans" font-weight="bold" fill="#3a5ab8">A</text><text x="0.5" y="11.8" font-size="6.3" font-family="Liberation Sans" font-weight="bold" fill="#b82828">Z</text><path d="M6 11 H8" stroke="#999" stroke-width=".7"/></svg></div>
<div class="a " style="left:331.5px;top:123.5px;width:9px;height:13px;"><svg width="9" height="13" viewBox="0 0 9 13"><text x="0.5" y="5.5" font-size="6" font-family="Liberation Sans" font-weight="bold" fill="#b82828">Z</text><text x="0.3" y="11.8" font-size="6.3" font-family="Liberation Sans" font-weight="bold" fill="#3a5ab8">A</text><path d="M6 11 H8" stroke="#999" stroke-width=".7"/></svg></div>
<div class="a " style="left:475.3px;top:178.4px;width:375.5px;height:350.5px;box-shadow:0 0 9px 2px rgba(0,0,0,.32);border-radius:4px 4px 0 0"></div>
<div class="a " style="left:475.3px;top:178.4px;width:375.5px;height:350.5px;border-radius:4px 4px 0 0;background:linear-gradient(180deg,#b4cce8 0%,#c4d8ee 6%,#cddff2 100%);border:1px solid #3d4450"></div>
<div class="a " style="left:476.3px;top:179.4px;width:373.5px;height:18px;border-radius:3px 3px 0 0;background:linear-gradient(90deg,#b8d0eb 0%,#c8dbf0 30%,#bcd2ec 60%,#c5d8ee 100%)"></div>
<div class="a " style="left:479.5px;top:181.5px;width:11px;height:11px;"><svg width="11" height="11" viewBox="0 0 11 11"><ellipse cx="2.2" cy="2" rx="1.7" ry="2" transform="rotate(-40 2.2 2)" fill="#e8d068" stroke="#6a5a20" stroke-width=".5"/><path d="M2.5 3 L9.5 9.3 L8.8 10.2 L1.6 3.9Z" fill="#c8a848" stroke="#5a4a18" stroke-width=".4"/><path d="M4 5 L7.5 6.5 L8 8" stroke="#8a9ab8" stroke-width=".7" fill="none"/><path d="M8.5 9 L10.5 10.5" stroke="#303030" stroke-width="1"/></svg></div>
<div class="t " style="left:492.8px;top:182.6px;font-size:8.18px;color:#1c1c34;transform:scaleX(0.8929)">Kayıt Listesini Uyarla</div>
<div class="a " style="left:782.3px;top:178.4px;width:17px;height:11.5px;border:1px solid #5d6878;border-top:none;border-radius:0 0 0 3px;background:linear-gradient(180deg,#eef3f9 0%,#d4e0ee 45%,#b8cadf 50%,#cfdcec 100%)"><svg width="15" height="11" viewBox="0 0 15 11"><rect x="4.3" y="6" width="6.5" height="2" rx=".6" fill="#e8eef6" stroke="#6a7a90" stroke-width=".7"/></svg></div>
<div class="a " style="left:799.4px;top:178.4px;width:17px;height:11.5px;border:1px solid #5d6878;border-top:none;border-left:none;background:linear-gradient(180deg,#eef3f9 0%,#d4e0ee 45%,#b8cadf 50%,#cfdcec 100%)"><svg width="16" height="11" viewBox="0 0 16 11"><rect x="4.5" y="2.5" width="7" height="5.5" fill="none" stroke="#3a4458" stroke-width="2"/><rect x="4.5" y="2.5" width="7" height="5.5" fill="none" stroke="#fff" stroke-width=".8"/></svg></div>
<div class="a " style="left:816.3px;top:178.4px;width:30px;height:11.5px;border:1px solid #5a1f18;border-top:none;border-left:none;border-radius:0 0 3px 0;background:linear-gradient(180deg,#eeb0a4 0%,#de7a64 40%,#c84628 50%,#d25a38 80%,#e08a6a 100%)"><svg width="29" height="11" viewBox="0 0 29 11"><path d="M12 3 L17.5 8 M17.5 3 L12 8" stroke="#4a3a3a" stroke-width="2.6"/><path d="M12 3 L17.5 8 M17.5 3 L12 8" stroke="#fff" stroke-width="1.3"/></svg></div>
<div class="a " style="left:479.4px;top:197px;width:367.6px;height:328px;background:#f0f0f0;border:1px solid #8f9cae"></div>
<div class="a " style="left:486.5px;top:218.5px;width:351.5px;height:258px;background:#fbfbfb;border:1px solid #a8a8a8"></div>
<div class="a " style="left:540.7px;top:206.2px;width:40px;height:12.6px;background:linear-gradient(180deg,#f2f2f2,#dcdcdc);border:1px solid #a0a0a0;border-bottom:none"></div>
<div class="t " style="left:543.4px;top:208.1px;font-size:7.84px;color:#1a1a1a;transform:scaleX(0.8929)">Seçenekler</div>
<div class="a " style="left:486.4px;top:205px;width:54.5px;height:14.5px;background:#fbfbfb;border:1px solid #a0a0a0;border-bottom:none;border-radius:2px 2px 0 0"></div>
<div class="t " style="left:492px;top:207.1px;font-size:8.18px;color:#1a1a1a;transform:scaleX(0.8929)">Veri Sütunları</div>
<div class="t " style="left:492.5px;top:223.4px;font-size:8.40px;color:#1a1a1a;transform:scaleX(0.8929)">Listede görüntülenmesini istediğiniz veri sütunlarını seçiniz.</div>
<div class="a " style="left:492px;top:237px;width:151.5px;height:211.6px;background:#fff;border:1px solid #828790"></div>
<div class="a " style="left:493.4px;top:284.4px;width:138.3px;height:10.9px;background:linear-gradient(180deg,#e4f0fd,#c9e0fb);border:1px solid #84acdd;border-radius:2px"></div>
<div class="t " style="left:509.2px;top:239.9px;font-size:8.12px;color:#1a1a2a;transform:scaleX(0.8929)">Değiştirme Dakikası</div>
<div class="t " style="left:509.2px;top:251.23000000000002px;font-size:8.12px;color:#1a1a2a;transform:scaleX(0.8929)">Değiştirme Saati</div>
<div class="t " style="left:509.2px;top:262.56000000000006px;font-size:8.12px;color:#1a1a2a;transform:scaleX(0.8929)">Değiştirme Saniyesi</div>
<div class="t " style="left:509.2px;top:273.89000000000004px;font-size:8.12px;color:#1a1a2a;transform:scaleX(0.8929)">Değiştirme Tarihi</div>
<div class="t " style="left:509.2px;top:285.22px;font-size:8.12px;color:#1a1a2a;transform:scaleX(0.8929)">Kategori Adı</div>
<div class="t " style="left:509.2px;top:296.55px;font-size:8.12px;color:#1a1a2a;transform:scaleX(0.8929)">Kayıt No</div>
<div class="t " style="left:509.2px;top:307.88000000000005px;font-size:8.12px;color:#1a1a2a;transform:scaleX(0.8929)">Ödeme Planı</div>
<div class="t " style="left:509.2px;top:319.21000000000004px;font-size:8.12px;color:#1a1a2a;transform:scaleX(0.8929)">Oluşturan Kullanıcı</div>
<div class="t " style="left:509.2px;top:330.54px;font-size:8.12px;color:#1a1a2a;transform:scaleX(0.8929)">Oluşturan Kullanıcı No</div>
<div class="t " style="left:509.2px;top:341.87px;font-size:8.12px;color:#1a1a2a;transform:scaleX(0.8929)">Oluşturma Dakikası</div>
<div class="t " style="left:509.2px;top:353.20000000000005px;font-size:8.12px;color:#1a1a2a;transform:scaleX(0.8929)">Oluşturma Saati</div>
<div class="t " style="left:509.2px;top:364.53000000000003px;font-size:8.12px;color:#1a1a2a;transform:scaleX(0.8929)">Oluşturma Saniyesi</div>
<div class="t " style="left:509.2px;top:375.86px;font-size:8.12px;color:#1a1a2a;transform:scaleX(0.8929)">Oluşturma Tarihi</div>
<div class="t " style="left:509.2px;top:387.19000000000005px;font-size:8.12px;color:#1a1a2a;transform:scaleX(0.8929)">Özel Kodu 2</div>
<div class="t " style="left:509.2px;top:398.52000000000004px;font-size:8.12px;color:#1a1a2a;transform:scaleX(0.8929)">Özel Kodu 3</div>
<div class="t " style="left:509.2px;top:409.85px;font-size:8.12px;color:#1a1a2a;transform:scaleX(0.8929)">Özel Kodu 4</div>
<div class="t " style="left:509.2px;top:421.18000000000006px;font-size:8.12px;color:#1a1a2a;transform:scaleX(0.8929)">Özel Kodu 5</div>
<div class="t " style="left:509.2px;top:432.51000000000005px;font-size:8.12px;color:#1a1a2a;transform:scaleX(0.8929)">Ürün Barkod (EAN)</div>
<div class="a " style="left:633px;top:238px;width:9.5px;height:209.6px;background:linear-gradient(90deg,#e8e8e8,#f4f4f4)"></div>
<div class="a " style="left:635.5px;top:242.5px;width:5px;height:3px;"><svg width="5" height="3"><path d="M0 3 H5 L2.5 0Z" fill="#333"/></svg></div>
<div class="a " style="left:635.5px;top:440.5px;width:5px;height:3px;"><svg width="5" height="3"><path d="M0 0 H5 L2.5 3Z" fill="#333"/></svg></div>
<div class="a " style="left:633.5px;top:277.4px;width:9px;height:159.5px;background:linear-gradient(90deg,#f4f4f4,#dcdcdc);border:1px solid #9a9a9a;border-radius:2px"></div>
<div class="a " style="left:636px;top:354px;width:4px;height:4px;background:repeating-linear-gradient(180deg,#777 0 .8px,transparent .8px 1.6px)"></div>
<div class="a " style="left:648px;top:326.5px;width:30px;height:13.699999999999989px;background:linear-gradient(180deg,#f2f2f2 0%,#ebebeb 50%,#dddddd 51%,#cfcfcf 100%);border:1px solid #707070;border-radius:2px;"></div>
<div class="t " style="left:652.5px;top:328.95000000000005px;font-size:8.06px;color:#1a1a1a;transform:scaleX(0.8929)">Ekle &gt;</div>
<div class="a " style="left:648px;top:345.2px;width:30px;height:14.5px;background:linear-gradient(180deg,#f2f2f2 0%,#ebebeb 50%,#dddddd 51%,#cfcfcf 100%);border:1px solid #707070;border-radius:2px;"></div>
<div class="t " style="left:651px;top:348.05px;font-size:8.06px;color:#1a1a1a;transform:scaleX(0.8929)">&lt; Çıkar</div>
<div class="a " style="left:682px;top:237.3px;width:151.7px;height:211.4px;background:#fff;border:1px solid #828790"></div>
<div class="a " style="left:683px;top:341px;width:149.7px;height:10.7px;background:#ececec"></div>
<div class="t " style="left:698.3px;top:239.9px;font-size:8.12px;color:#1a1a2a;transform:scaleX(0.8929)">Türü</div>
<div class="t " style="left:698.3px;top:251.23000000000002px;font-size:8.12px;color:#1a1a2a;transform:scaleX(0.8929)">Kod</div>
<div class="t " style="left:698.3px;top:262.56000000000006px;font-size:8.12px;color:#1a1a2a;transform:scaleX(0.8929)">Açıklama</div>
<div class="t " style="left:698.3px;top:273.89000000000004px;font-size:8.12px;color:#1a1a2a;transform:scaleX(0.8929)">Açıklama 2</div>
<div class="t " style="left:698.3px;top:285.22px;font-size:8.12px;color:#1a1a2a;transform:scaleX(0.8929)">Grup Kodu</div>
<div class="t " style="left:698.3px;top:296.55px;font-size:8.12px;color:#1a1a2a;transform:scaleX(0.8929)">Üretici Kodu</div>
<div class="t " style="left:698.3px;top:307.88000000000005px;font-size:8.12px;color:#1a1a2a;transform:scaleX(0.8929)">Özel Kod</div>
<div class="t " style="left:698.3px;top:319.21000000000004px;font-size:8.12px;color:#1a1a2a;transform:scaleX(0.8929)">KDV</div>
<div class="t " style="left:698.3px;top:330.54px;font-size:8.12px;color:#1a1a2a;transform:scaleX(0.8929)">Aktif</div>
<div class="t " style="left:698.3px;top:341.87px;font-size:8.12px;color:#1a1a2a;transform:scaleX(0.8929)">Ek Vergi</div>
<div class="a " style="left:493px;top:453px;width:84.70000000000005px;height:14.600000000000023px;background:linear-gradient(180deg,#f2f2f2 0%,#ebebeb 50%,#dddddd 51%,#cfcfcf 100%);border:1px solid #707070;border-radius:2px;"></div>
<div class="t " style="left:510.7px;top:455.90000000000003px;font-size:8.06px;color:#1a1a1a;transform:scaleX(0.8929)">Öndeğere Geri Dön</div>
<div class="a " style="left:497.5px;top:456.5px;width:9px;height:7px;"><svg width="9" height="7" viewBox="0 0 9 7"><path d="M0 2 L3 0 V1.3 H6 C8 1.3 9 3 8 5 L7 6.5 C7.5 4.5 7 3.5 5.5 3.5 H3 V4.5Z" fill="#e8b020" stroke="#a07010" stroke-width=".5"/></svg></div>
<div class="a " style="left:685.4px;top:452.5px;width:70.10000000000002px;height:15.199999999999989px;background:linear-gradient(180deg,#f2f2f2 0%,#ebebeb 50%,#dddddd 51%,#cfcfcf 100%);border:1px solid #707070;border-radius:2px;"></div>
<div class="t " style="left:708.5px;top:455.70000000000005px;font-size:8.06px;color:#1a1a1a;transform:scaleX(0.8929)">Yukarı Taşı</div>
<div class="a " style="left:697.5px;top:454.5px;width:8px;height:11px;"><svg width="8" height="11" viewBox="0 0 8 11"><path d="M4 0.5 L7.5 4.5 H5.5 V10.5 H2.5 V4.5 H0.5Z" fill="#f6c12a" stroke="#b58010" stroke-width=".6"/></svg></div>
<div class="a " style="left:759.6px;top:452.5px;width:70.10000000000002px;height:15.199999999999989px;background:#f4f4f4;border:1px solid #c4c4c4;border-radius:2px;"></div>
<div class="t " style="left:784.4px;top:455.70000000000005px;font-size:8.06px;color:#a0a0a0;transform:scaleX(0.8929)">Aşağı Taşı</div>
<div class="a " style="left:772.5px;top:454.5px;width:8px;height:11px;"><svg width="8" height="11" viewBox="0 0 8 11"><path d="M4 10.5 L7.5 6.5 H5.5 V0.5 H2.5 V6.5 H0.5Z" fill="none" stroke="#bbb" stroke-width=".7"/></svg></div>
<div class="a " style="left:482.7px;top:488px;width:359.3px;height:1px;background:#dcdcdc;box-shadow:0 1px 0 #fff"></div>
<div class="a " style="left:720.3px;top:502px;width:56.40000000000009px;height:13.799999999999955px;background:linear-gradient(180deg,#f0f8fd 0%,#e0f0fb 50%,#cde6f7 51%,#c0def2 100%);border:1px solid #4a8cc0;border-radius:2px;box-shadow:inset 0 0 0 1px #a8e0f8"></div>
<div class="t " style="left:736px;top:504.5px;font-size:8.06px;color:#1a1a1a;transform:scaleX(0.8929)">Tamam</div>
<div class="a " style="left:781.6px;top:502px;width:56.89999999999998px;height:13.799999999999955px;background:linear-gradient(180deg,#f2f2f2 0%,#ebebeb 50%,#dddddd 51%,#cfcfcf 100%);border:1px solid #707070;border-radius:2px;"></div>
<div class="t " style="left:802px;top:504.5px;font-size:8.06px;color:#1a1a1a;transform:scaleX(0.8929)">İptal</div>
<div class="a " style="left:0px;top:533px;width:855px;height:29px;background:linear-gradient(180deg,#2c6cc0 0%,#1e58a8 8%,#1a4f9c 100%);border-top:1px solid #0f2f5c"></div>
<div class="a " style="left:712px;top:534px;width:30px;height:28px;background:linear-gradient(90deg,rgba(255,255,255,0) 0%,rgba(190,220,255,.12) 60%,rgba(220,240,255,.30) 80%,rgba(255,255,255,0) 100%);transform:skewX(45deg);transform-origin:0 0;filter:blur(.6px)"></div>
<div class="a " style="left:78.7px;top:534px;width:41.6px;height:28px;background:linear-gradient(180deg,rgba(190,220,255,.42) 0%,rgba(150,195,250,.28) 45%,rgba(120,170,240,.18) 55%,rgba(120,170,240,.12) 100%);border:1px solid rgba(200,225,255,.5);border-bottom:none;border-radius:2px 2px 0 0"></div>
<div class="a " style="left:79.5px;top:535px;width:40px;height:27px;background:linear-gradient(120deg,rgba(255,255,255,.18) 0%,rgba(255,255,255,0) 50%)"></div>
<div class="a " style="left:6px;top:534.5px;width:26px;height:26px;border-radius:50%;background:radial-gradient(circle at 50% 100%,#5ad8ff 0%,#2aa0e8 25%,#1a5aa8 55%,#16468a 75%,#5a8ec8 88%,#d0e4f6 95%,#7aa4d4 100%);box-shadow:0 0 1.5px rgba(180,220,255,.6)"></div>
<div class="a " style="left:9px;top:536px;width:20px;height:10px;border-radius:50% 50% 40% 40%;background:linear-gradient(180deg,rgba(255,255,255,.45),rgba(255,255,255,.05))"></div>
<div class="a " style="left:10.5px;top:538.5px;width:19px;height:18px;"><svg width="19" height="18" viewBox="0 0 19 18"><path d="M2.2 2.2 C4.5 1 6.8 1.3 9.2 2.6 L7.9 7.6 C5.8 6.4 3.6 6.2 0.9 7.1Z" fill="#f25a20"/><path d="M10.2 3 C12.3 4.3 14.6 4.5 17.8 3.3 L16.5 8.3 C13.6 9.3 11.4 9 8.9 8Z" fill="#8ccc30"/><path d="M0.6 8.2 C3.3 7.3 5.5 7.5 7.6 8.7 L6.3 13.7 C4.2 12.5 2 12.4 -0.7 13.2Z" fill="#38b0f0"/><path d="M8.6 9 C11.1 10.1 13.3 10.3 16.2 9.4 L14.9 14.4 C11.9 15.3 9.7 15.1 7.3 14Z" fill="#fcc418"/></svg></div>
<div class="a " style="left:53px;top:536px;width:23px;height:23px;"><svg width="23" height="23" viewBox="0 0 23 23"><path d="M3.5 12.5 C3.5 6.8 7.6 3.3 12 3.3 C17 3.3 20.3 7 20.3 12.3 V13.6 H9.3 C9.7 16 11.4 17.4 13.6 17.4 C15.3 17.4 16.6 16.7 17.4 15.5 H20.2 C19 19.3 16.2 21.3 12.4 21.3 C7.3 21.3 3.5 17.6 3.5 12.5Z M9.4 10.2 H15 C14.8 8.3 13.8 7.2 12.2 7.2 C10.7 7.2 9.6 8.3 9.4 10.2Z" fill="#52c8f4" stroke="#1a78c0" stroke-width=".7"/><path d="M6 10 C7 6 10 4.5 12 4.5" stroke="#b8f0ff" stroke-width="1" fill="none"/><path d="M1.5 22 C-1 18.5 5 6.5 14.5 1.8 C19.5 -0.5 22.5 0.5 21.8 3 C21 1.5 18.3 1.6 15.3 3.2 C7 7.6 1.5 17.8 3.3 20.6 C4.1 21.6 6 21.5 8 20.6 C5.5 22.3 2.8 22.8 1.5 22Z" fill="#f6bc10" stroke="#b88000" stroke-width=".4"/></svg></div>
<div class="a " style="left:86px;top:534.5px;width:26px;height:26px;"><svg width="26" height="26" viewBox="0 0 26 26"><path d="M1.5 4 C2 1.5 4.5 0.5 7.5 1 L9.5 5.8 L6.2 8.2 C4 7 2 6 1.5 4Z" fill="#f0c840" stroke="#7a5a10" stroke-width=".6"/><ellipse cx="4.3" cy="3.6" rx="2.5" ry="1.6" transform="rotate(-40 4.3 3.6)" fill="#8a6410"/><path d="M7.5 7 L22.5 22 L21.5 23 L6.5 8Z" fill="#d8a830" stroke="#6a4a10" stroke-width=".5"/><path d="M8.5 10.5 C9 9 11 9 12.5 10.5 L18 16 C19 17 19 19 17.5 19.5 C16.5 19.8 15.5 19.3 14.5 18.3 L9.5 13.3 C8.5 12.3 8.2 11.3 8.5 10.5Z" fill="none" stroke="#c89020" stroke-width="1.3"/><path d="M8.5 10.5 C9 9 11 9 12.5 10.5 L18 16 C19 17 19 19 17.5 19.5 C16.5 19.8 15.5 19.3 14.5 18.3 L9.5 13.3 C8.5 12.3 8.2 11.3 8.5 10.5Z" fill="none" stroke="#6a4a10" stroke-width=".4"/><path d="M21.5 21.5 L24.5 24.5" stroke="#e0c0a0" stroke-width="1.6"/></svg></div>
<div class="t " style="left:773.4px;top:541.1px;font-size:8.40px;color:#dde8f6;-webkit-text-stroke:0;transform:scaleX(0.8929)">TR</div>
<div class="a " style="left:795.7px;top:546.5px;width:5.5px;height:3px;"><svg width="6" height="3"><path d="M0 3 H6 L3 0Z" fill="#fff"/></svg></div>
<div class="a " style="left:810.5px;top:541px;width:11px;height:12px;"><svg width="11" height="12" viewBox="0 0 11 12"><path d="M1 0.5 V11.5" stroke="#dfe6f0" stroke-width="1"/><path d="M1.5 1 H5.5 L6.3 2.2 H10 L8.5 4.3 L10 6.5 H6 L5.2 5.3 H1.5Z" fill="#f4f6fa"/></svg></div>
<div class="a " style="left:828.5px;top:542px;width:12px;height:11px;"><svg width="12" height="11" viewBox="0 0 12 11"><rect x="0.5" y="0.5" width="2.5" height="2.5" fill="#d8d8d8"/><rect x="3" y="2.5" width="8" height="6" fill="#1f4f9c" stroke="#eef2f8" stroke-width="1"/><path d="M1.5 3 V10 H6.5" stroke="#eef2f8" stroke-width="1" fill="none"/></svg></div>
<div class="a " style="left:846px;top:541.5px;width:9px;height:12px;"><svg width="9" height="12" viewBox="0 0 9 12"><path d="M0.3 4 H2.5 L6 1 V11 L2.5 8 H0.3Z" fill="#e8eef6"/><path d="M7.3 3.5 C8.8 5 8.8 7 7.3 8.5" stroke="#e8eef6" stroke-width="1" fill="none"/></svg></div></body></html>
